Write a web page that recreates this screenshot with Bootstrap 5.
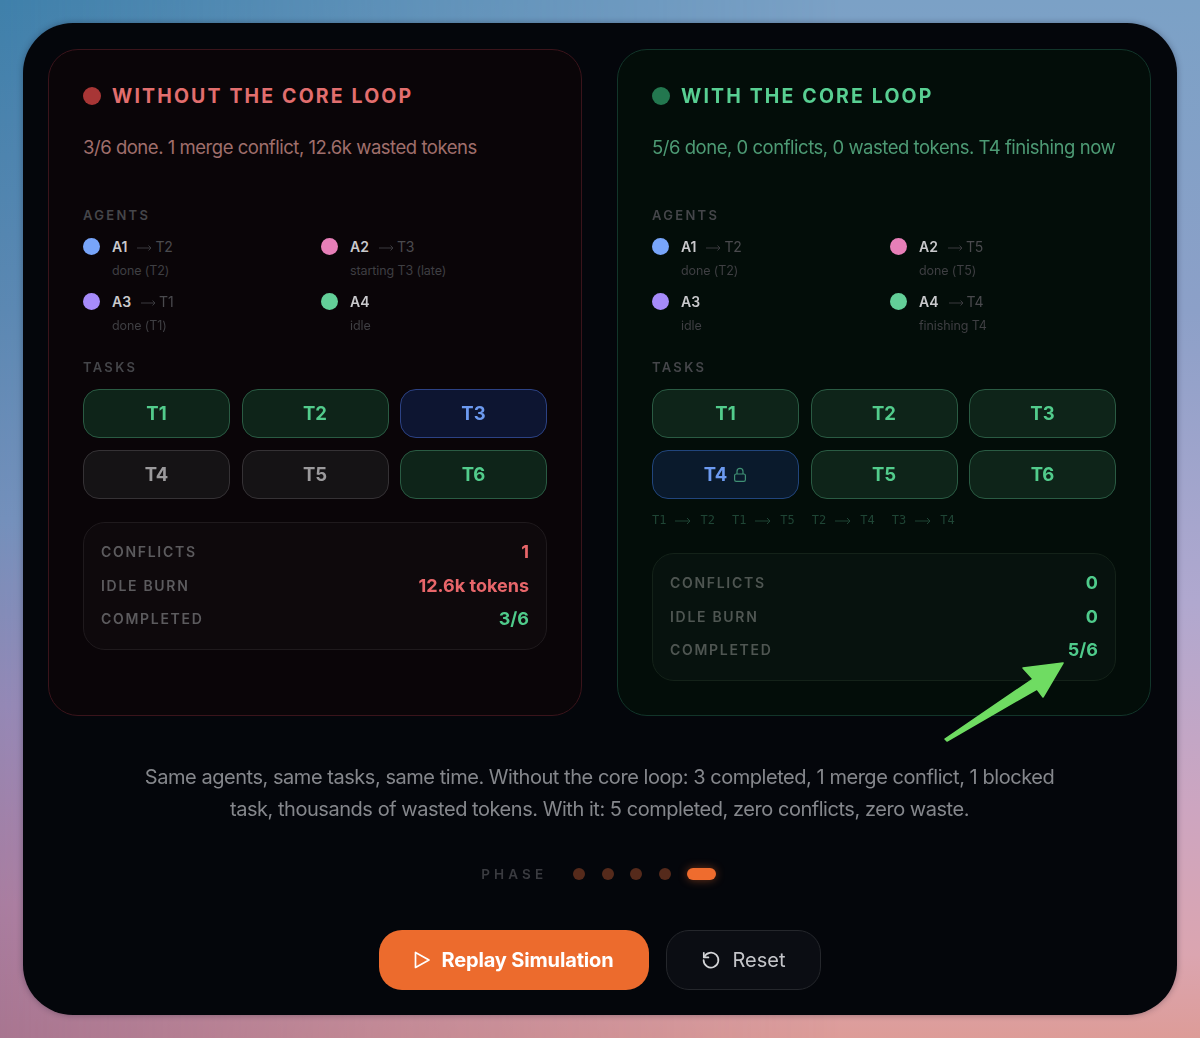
<!DOCTYPE html>
<html lang="en">
<head>
    <meta charset="UTF-8">
    <meta name="viewport" content="width=device-width, initial-scale=1.0">
    <title>Core Loop Simulation</title>
    <link href="https://cdn.jsdelivr.net/npm/bootstrap@5.3.0/dist/css/bootstrap.min.css" rel="stylesheet">
    <style>
        html, body { height: 100%; }
        body {
            font-family: 'Inter', 'Liberation Sans', sans-serif;
            background: linear-gradient(180deg, #7ba1c6 0%, #8ca0c8 30%, #b0a8cf 58%, #cda5c0 78%, #dba5b0 92%, #dd9c98 100%);
            padding: 23px;
            overflow: hidden;
        }
        body::before {
            content: "";
            position: fixed;
            inset: 0;
            background: linear-gradient(180deg, #3f80aa 0%, #5b88b2 30%, #7390bb 50%, #9488b5 68%, #a97da0 87%, #a87590 100%);
            -webkit-mask-image: linear-gradient(90deg, #000 0%, rgba(0,0,0,.45) 35%, transparent 70%);
            mask-image: linear-gradient(90deg, #000 0%, rgba(0,0,0,.45) 35%, transparent 70%);
        }
        .sim-frame {
            position: relative;
            height: 992px;
            background: #04060b;
            border-radius: 50px;
            padding: 26px 26px 0 25px;
            box-shadow: 0 0 6px rgba(20,20,40,.35);
        }
        .sim-panel {
            width: 534px;
            height: 667px;
            border-radius: 30px;
            padding: 34px 34px;
            border: 1px solid;
        }
        .panel-bad { background: #0a0508; border-color: #3a141b; }
        .panel-good { background: #030d09; border-color: #12352a; }
        .panel-title {
            font-size: 19.5px;
            font-weight: 700;
            letter-spacing: 2.15px;
            line-height: 24px;
        }
        .title-dot { width: 18px; height: 18px; border-radius: 50%; margin-right: 3px; }
        .panel-bad .panel-title { color: #e26e6e; }
        .panel-bad .title-dot { background: #a83636; }
        .panel-good .panel-title { color: #58cf92; }
        .panel-good .title-dot { background: #23774f; }
        .panel-sub {
            font-size: 18.5px;
            letter-spacing: -.47px;
            line-height: 24px;
            margin: 27px 0 0;
            white-space: nowrap;
        }
        .panel-bad .panel-sub { color: #a06f6c; }
        .panel-good .panel-sub { color: #4d9a74; }
        .sec-label {
            font-size: 13px;
            font-weight: 600;
            letter-spacing: 2.3px;
            line-height: 16px;
            color: #45464a;
        }
        .label-agents { margin: 48px 0 0; }
        .label-tasks { margin: 21px 0 0; }
        .agent-grid {
            display: grid;
            grid-template-columns: 238px 1fr;
            row-gap: 8px;
            margin-top: 13px;
        }
        .agent-item { height: 47px; line-height: 20px; }
        .agent-dot { width: 17px; height: 17px; border-radius: 50%; margin: 1.5px 12px 0 0; flex: none; }
        .agent-name { font-size: 14px; font-weight: 600; color: #c9c9cc; }
        .agent-to { font-size: 14px; color: #4a4a4e; margin-left: 10px; letter-spacing: -.2px; }
        .agent-to svg { margin-right: 3px; vertical-align: 0; }
        .agent-state { font-size: 12.5px; color: #3f3f43; line-height: 16px; margin-top: 6px; letter-spacing: -.1px; }
        .dot-blue { background: #78a5fa; }
        .dot-pink { background: #e77fb8; }
        .dot-violet { background: #a68bfa; }
        .dot-green { background: #63cf98; }
        .task-grid {
            display: grid;
            grid-template-columns: repeat(3, 147px);
            gap: 12px 11.5px;
            margin-top: 14px;
        }
        .task-chip {
            height: 49px;
            border-radius: 16px;
            border: 1px solid;
            font-size: 18.5px;
            font-weight: 700;
            gap: 6px;
        }
        .chip-done { background: #0e2419; border-color: #2a5b43; color: #52cc8c; }
        .chip-run { background: #0d1531; border-color: #2c4284; color: #6c9af0; }
        .chip-run-b { background: #0a1a2c; border-color: #21457c; color: #6c9af0; }
        .chip-idle { background: #151315; border-color: #353235; color: #9b9a9c; }
        .dep-row {
            font-family: 'DejaVu Sans Mono', 'Liberation Mono', monospace;
            font-size: 12px;
            line-height: 16px;
            color: #1f4535;
            gap: 17px;
            margin-top: 13px;
            white-space: nowrap;
        }
        .dep-row svg { margin: 0 9px; }
        .stat-box {
            height: 128px;
            border-radius: 22px;
            border: 1px solid;
            padding: 12px 17px;
        }
        .panel-bad .stat-box { background: #0e090c; border-color: #1f1a1d; margin-top: 23px; }
        .panel-good .stat-box { background: #07120e; border-color: #142219; margin-top: 25px; }
        .stat-line { height: 33.5px; }
        .stat-name { font-size: 14px; font-weight: 600; letter-spacing: 1.7px; color: #5c5b5e; }
        .panel-good .stat-name { color: #4f5652; }
        .stat-val { font-size: 18px; font-weight: 700; }
        .val-red { color: #e8666a; }
        .val-green { color: #4fcb8b; }
        .sim-caption {
            width: 960px;
            margin: 45px auto 0;
            text-align: center;
            font-size: 20px;
            line-height: 32px;
            letter-spacing: -.46px;
            color: #85878c;
        }
        .phase-row { margin-top: 41px; height: 16px; padding-right: 2px; }
        .phase-label {
            font-size: 13.5px;
            font-weight: 600;
            letter-spacing: 4.1px;
            color: #3a3b40;
            margin-right: 26px;
        }
        .phase-dot { width: 12px; height: 12px; border-radius: 50%; background: #552a1b; margin-right: 16.5px; }
        .phase-now {
            width: 29px;
            height: 12px;
            border-radius: 6px;
            background: #ef6c2e;
            box-shadow: 0 0 10px rgba(239,108,46,.45);
            margin-left: -.5px;
        }
        .action-row { margin-top: 48px; gap: 17px; }
        .btn.btn-replay, .btn.btn-reset {
            height: 60px;
            border-radius: 23px;
            display: flex;
            align-items: center;
            justify-content: center;
            font-size: 20px;
        }
        .btn.btn-replay {
            width: 270px;
            background: #ec6b2d;
            border: 0;
            color: #fff;
            font-weight: 700;
            letter-spacing: -.15px;
            gap: 10px;
        }
        .btn.btn-reset {
            width: 155px;
            background: #0b0d13;
            border: 1px solid #25272c;
            color: #c4c5c9;
            gap: 12px;
        }
        .note-arrow { position: absolute; left: -23px; top: -23px; pointer-events: none; }
    </style>
</head>
<body>
    <div class="sim-frame">
        <div class="d-flex justify-content-between">

            <div class="sim-panel panel-bad">
                <div class="d-flex align-items-center gap-2 panel-title"><span class="title-dot"></span>WITHOUT THE CORE LOOP</div>
                <p class="panel-sub">3/6 done. 1 merge conflict, 12.6k wasted tokens</p>
                <div class="sec-label label-agents">AGENTS</div>
                <div class="agent-grid">
                    <div class="agent-item d-flex"><span class="agent-dot dot-blue"></span><div><span class="agent-name">A1</span><span class="agent-to"><svg width="15" height="8" viewBox="0 0 15 8" fill="none" stroke="#3a3a3e"><path d="M0 4h14M11.500 1.500 14 4l-2.500 2.500"/></svg>T2</span><div class="agent-state">done (T2)</div></div></div>
                    <div class="agent-item d-flex"><span class="agent-dot dot-pink"></span><div><span class="agent-name">A2</span><span class="agent-to"><svg width="15" height="8" viewBox="0 0 15 8" fill="none" stroke="#3a3a3e"><path d="M0 4h14M11.500 1.500 14 4l-2.500 2.500"/></svg>T3</span><div class="agent-state">starting T3 (late)</div></div></div>
                    <div class="agent-item d-flex"><span class="agent-dot dot-violet"></span><div><span class="agent-name">A3</span><span class="agent-to"><svg width="15" height="8" viewBox="0 0 15 8" fill="none" stroke="#3a3a3e"><path d="M0 4h14M11.500 1.500 14 4l-2.500 2.500"/></svg>T1</span><div class="agent-state">done (T1)</div></div></div>
                    <div class="agent-item d-flex"><span class="agent-dot dot-green"></span><div><span class="agent-name">A4</span><div class="agent-state">idle</div></div></div>
                </div>
                <div class="sec-label label-tasks">TASKS</div>
                <div class="task-grid">
                    <div class="task-chip chip-done d-flex align-items-center justify-content-center">T1</div>
                    <div class="task-chip chip-done d-flex align-items-center justify-content-center">T2</div>
                    <div class="task-chip chip-run d-flex align-items-center justify-content-center">T3</div>
                    <div class="task-chip chip-idle d-flex align-items-center justify-content-center">T4</div>
                    <div class="task-chip chip-idle d-flex align-items-center justify-content-center">T5</div>
                    <div class="task-chip chip-done d-flex align-items-center justify-content-center">T6</div>
                </div>
                <div class="stat-box">
                    <div class="stat-line d-flex justify-content-between align-items-center"><span class="stat-name">CONFLICTS</span><span class="stat-val val-red">1</span></div>
                    <div class="stat-line d-flex justify-content-between align-items-center"><span class="stat-name">IDLE BURN</span><span class="stat-val val-red">12.6k tokens</span></div>
                    <div class="stat-line d-flex justify-content-between align-items-center"><span class="stat-name">COMPLETED</span><span class="stat-val val-green">3/6</span></div>
                </div>
            </div>

            <div class="sim-panel panel-good">
                <div class="d-flex align-items-center gap-2 panel-title"><span class="title-dot"></span>WITH THE CORE LOOP</div>
                <p class="panel-sub">5/6 done, 0 conflicts, 0 wasted tokens. T4 finishing now</p>
                <div class="sec-label label-agents">AGENTS</div>
                <div class="agent-grid">
                    <div class="agent-item d-flex"><span class="agent-dot dot-blue"></span><div><span class="agent-name">A1</span><span class="agent-to"><svg width="15" height="8" viewBox="0 0 15 8" fill="none" stroke="#3a3a3e"><path d="M0 4h14M11.500 1.500 14 4l-2.500 2.500"/></svg>T2</span><div class="agent-state">done (T2)</div></div></div>
                    <div class="agent-item d-flex"><span class="agent-dot dot-pink"></span><div><span class="agent-name">A2</span><span class="agent-to"><svg width="15" height="8" viewBox="0 0 15 8" fill="none" stroke="#3a3a3e"><path d="M0 4h14M11.500 1.500 14 4l-2.500 2.500"/></svg>T5</span><div class="agent-state">done (T5)</div></div></div>
                    <div class="agent-item d-flex"><span class="agent-dot dot-violet"></span><div><span class="agent-name">A3</span><div class="agent-state">idle</div></div></div>
                    <div class="agent-item d-flex"><span class="agent-dot dot-green"></span><div><span class="agent-name">A4</span><span class="agent-to"><svg width="15" height="8" viewBox="0 0 15 8" fill="none" stroke="#3a3a3e"><path d="M0 4h14M11.500 1.500 14 4l-2.500 2.500"/></svg>T4</span><div class="agent-state">finishing T4</div></div></div>
                </div>
                <div class="sec-label label-tasks">TASKS</div>
                <div class="task-grid">
                    <div class="task-chip chip-done d-flex align-items-center justify-content-center">T1</div>
                    <div class="task-chip chip-done d-flex align-items-center justify-content-center">T2</div>
                    <div class="task-chip chip-done d-flex align-items-center justify-content-center">T3</div>
                    <div class="task-chip chip-run-b d-flex align-items-center justify-content-center">T4
                        <svg width="14" height="16" viewBox="0 0 14 16" fill="none" stroke="#3f8f74" stroke-width="1.2"><rect x="1.600" y="7" width="10.800" height="7.400" rx="1.600"/><path d="M4 7V4.400a3 3 0 0 1 6 0V7"/></svg>
                    </div>
                    <div class="task-chip chip-done d-flex align-items-center justify-content-center">T5</div>
                    <div class="task-chip chip-done d-flex align-items-center justify-content-center">T6</div>
                </div>
                <div class="dep-row d-flex">
                    <span>T1<svg width="16" height="8" viewBox="0 0 16 8" fill="none" stroke="#1f4535"><path d="M0 4h15M12 1l3 3-3 3"/></svg>T2</span>
                    <span>T1<svg width="16" height="8" viewBox="0 0 16 8" fill="none" stroke="#1f4535"><path d="M0 4h15M12 1l3 3-3 3"/></svg>T5</span>
                    <span>T2<svg width="16" height="8" viewBox="0 0 16 8" fill="none" stroke="#1f4535"><path d="M0 4h15M12 1l3 3-3 3"/></svg>T4</span>
                    <span>T3<svg width="16" height="8" viewBox="0 0 16 8" fill="none" stroke="#1f4535"><path d="M0 4h15M12 1l3 3-3 3"/></svg>T4</span>
                </div>
                <div class="stat-box">
                    <div class="stat-line d-flex justify-content-between align-items-center"><span class="stat-name">CONFLICTS</span><span class="stat-val val-green">0</span></div>
                    <div class="stat-line d-flex justify-content-between align-items-center"><span class="stat-name">IDLE BURN</span><span class="stat-val val-green">0</span></div>
                    <div class="stat-line d-flex justify-content-between align-items-center"><span class="stat-name">COMPLETED</span><span class="stat-val val-green">5/6</span></div>
                </div>
            </div>
        </div>

        <p class="sim-caption">Same agents, same tasks, same time. Without the core loop: 3 completed, 1 merge conflict, 1 blocked<br>task, thousands of wasted tokens. With it: 5 completed, zero conflicts, zero waste.</p>

        <div class="phase-row d-flex align-items-center justify-content-center">
            <span class="phase-label">PHASE</span>
            <span class="phase-dot"></span><span class="phase-dot"></span><span class="phase-dot"></span><span class="phase-dot"></span>
            <span class="phase-now"></span>
        </div>

        <div class="action-row d-flex justify-content-center">
            <button class="btn btn-replay" type="button">
                <svg width="18" height="20" viewBox="0 0 18 20" fill="none" stroke="#fff" stroke-width="1.7" stroke-linejoin="round"><path d="M2.500 2.500v15L16 10z"/></svg>
                Replay Simulation
            </button>
            <button class="btn btn-reset" type="button">
                <svg width="20" height="20" viewBox="0 0 20 20" fill="none" stroke="#d4d5d8" stroke-width="1.7" stroke-linecap="round" stroke-linejoin="round"><path d="M3.200 7.200A7.400 7.400 0 1 1 2.600 10"/><path d="M2.800 2.800v4.600h4.600"/></svg>
                Reset
            </button>
        </div>

        <svg class="note-arrow" width="1200" height="1038" viewBox="0 0 1200 1038">
            <polygon points="1063,663 1023,668 1033,679 945,739 947,741 1037,689 1043,697" fill="#6fdc62" stroke="#6fdc62" stroke-width="1.5" stroke-linejoin="round"/>
        </svg>
    </div>
    <script src="https://cdn.jsdelivr.net/npm/bootstrap@5.3.0/dist/js/bootstrap.bundle.min.js"></script>
</body>
</html>
